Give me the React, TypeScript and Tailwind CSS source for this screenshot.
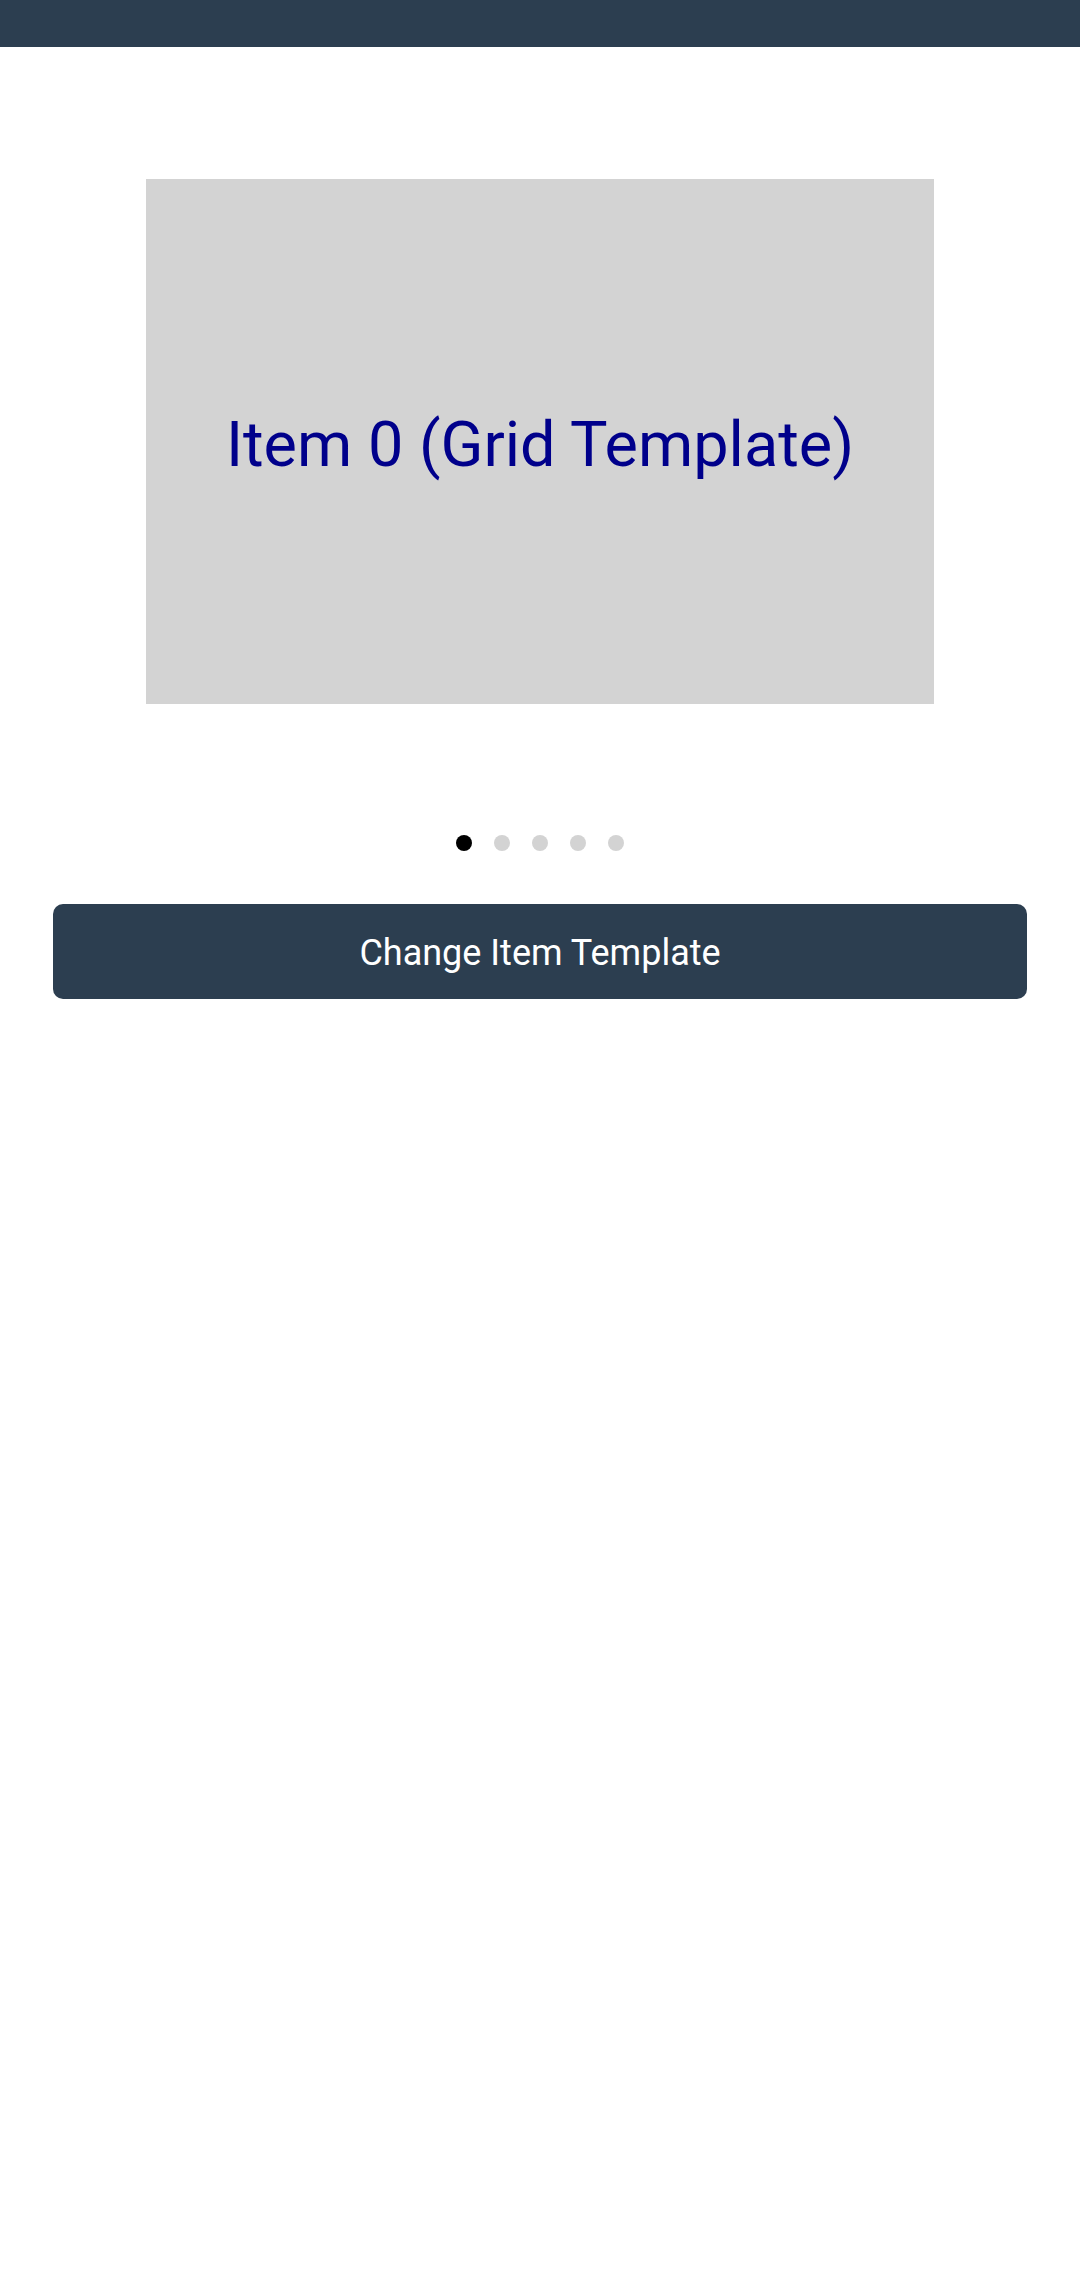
const dots = [0, 1, 2, 3, 4];

const App = () => {
  return (
    <div className="min-h-[2289px] w-[1080px] bg-white font-['Roboto',sans-serif]">
      <div className="h-[47px] bg-[#2c3e50]" />

      <div className="pt-[132px] flex justify-center">
        <div className="w-[788px] h-[525px] bg-[#d3d3d3] flex items-center justify-center">
          <span className="pt-[5px] text-[63px] leading-none text-[#00008b]">
            Item 0 (Grid Template)
          </span>
        </div>
      </div>

      <div className="mt-[131px] flex justify-center gap-[22px]">
        {dots.map((i) => (
          <div
            key={i}
            className={
              i === 0
                ? "w-4 h-4 rounded-full bg-black"
                : "w-4 h-4 rounded-full bg-[#d3d3d3]"
            }
          />
        ))}
      </div>

      <div className="mt-[53px] px-[53px]">
        <button className="w-full h-[95px] pt-[3px] rounded-[10px] bg-[#2c3e50] text-white text-[36px] leading-none">
          Change Item Template
        </button>
      </div>
    </div>
  );
};

export default App;
